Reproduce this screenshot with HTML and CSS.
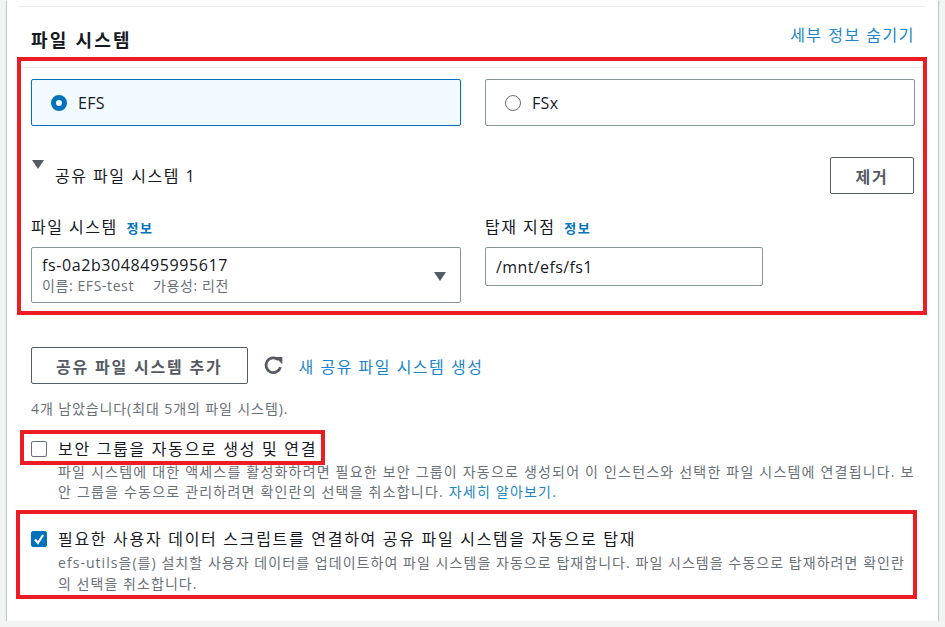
FILE: index.html
```html
<!DOCTYPE html>
<html lang="ko">
<head>
  <meta charset="UTF-8">
  <meta name="viewport" content="width=device-width, initial-scale=1.0">
  <link rel="stylesheet" href="styles.css">
  <title>파일 시스템</title>
</head>
<body>
  <div class="card">
    <div class="divider"></div>

    <div class="card-header">
      <h2>파일 시스템</h2>
      <a href="#" class="link header-link">세부 정보 숨기기</a>
    </div>

    <div class="fs-section">
      <span class="mark mark-fs"></span>

      <div class="tiles">
        <label class="tile tile-selected">
          <span class="radio radio-on"></span>
          <span>EFS</span>
        </label>
        <label class="tile">
          <span class="radio"></span>
          <span>FSx</span>
        </label>
      </div>

      <div class="expander">
        <span class="caret"></span>
        <span class="expander-title">공유 파일 시스템 1</span>
        <button class="btn btn-remove">제거</button>
      </div>

      <div class="fields">
        <div class="field">
          <div class="field-label">파일 시스템 <a href="#" class="info">정보</a></div>
          <div class="select">
            <div>
              <div class="select-value">fs-0a2b3048495995617</div>
              <div class="select-meta"><span>이름: EFS-test</span><span>가용성: 리전</span></div>
            </div>
            <span class="select-arrow"></span>
          </div>
        </div>
        <div class="field">
          <div class="field-label">탑재 지점 <a href="#" class="info">정보</a></div>
          <input class="text-input" type="text" value="/mnt/efs/fs1">
        </div>
      </div>
    </div>

    <div class="actions">
      <button class="btn btn-add">공유 파일 시스템 추가</button>
      <svg class="refresh" width="23" height="21" viewBox="0 0 20 20">
        <path d="M16.6 11.5A7 7 0 1 1 14.6 4.6" fill="none" stroke="#545b64" stroke-width="2.6"/>
        <polygon points="11.5,1.8 18.4,1.8 18.4,8.7" fill="#545b64"/>
      </svg>
      <a href="#" class="link">새 공유 파일 시스템 생성</a>
    </div>

    <p class="note">4개 남았습니다(최대 5개의 파일 시스템).</p>

    <div class="check-row check-sg">
      <span class="mark mark-sg"></span>
      <span class="checkbox"></span>
      <div>
        <div class="check-label">보안 그룹을 자동으로 생성 및 연결</div>
        <div class="check-desc">파일 시스템에 대한 액세스를 활성화하려면 필요한 보안 그룹이 자동으로 생성되어 이 인스턴스와 선택한 파일 시스템에 연결됩니다. 보안 그룹을 수동으로 관리하려면 확인란의 선택을 취소합니다. <a href="#" class="link">자세히 알아보기.</a></div>
      </div>
    </div>

    <div class="check-row check-mount">
      <span class="mark mark-mount"></span>
      <span class="checkbox checkbox-on">
        <svg width="12" height="12" viewBox="0 0 12 12"><path d="M2 6.5l3 3.5 5-8" fill="none" stroke="#fff" stroke-width="2.2"/></svg>
      </span>
      <div>
        <div class="check-label">필요한 사용자 데이터 스크립트를 연결하여 공유 파일 시스템을 자동으로 탑재</div>
        <div class="check-desc">efs-utils을(를) 설치할 사용자 데이터를 업데이트하여 파일 시스템을 자동으로 탑재합니다. 파일 시스템을 수동으로 탑재하려면 확인란의 선택을 취소합니다.</div>
      </div>
    </div>
  </div>
</body>
</html>
```

FILE: styles.css
```css
body {
  margin: 0;
  background-color: #f2f3f3;
  font-family: "Open Sans", "Noto Sans CJK KR", sans-serif;
  color: #16191f;
  letter-spacing: 1.5px;
}

.card {
  position: relative;
  margin-left: 7px;
  width: 931px;
  box-sizing: border-box;
  padding: 0 23px 27px 24px;
  background-color: #fff;
  box-shadow: 0 1px 1px 0 rgba(0, 28, 36, 0.3), 1px 1px 1px 0 rgba(0, 28, 36, 0.15), -1px 1px 1px 0 rgba(0, 28, 36, 0.15);
}

.divider {
  margin: 0 -11px 0 -12px;
  padding-top: 6px;
  border-bottom: 1px solid #eaeded;
}

.card-header {
  display: flex;
  justify-content: space-between;
  align-items: flex-start;
  margin-top: 22px;
  height: 22px;
}

.card-header h2 {
  margin: 0;
  font-size: 18px;
  line-height: 22px;
  font-weight: 700;
  letter-spacing: 2.2px;
}

.header-link {
  margin-top: -5px;
  margin-right: 0;
  font-size: 16px;
  line-height: 22px;
}

.link {
  color: #1a86c9;
  text-decoration: none;
}

/* red annotation boxes drawn over the content */
.mark {
  position: absolute;
  border: 4px solid #ec1c24;
  pointer-events: none;
}

.mark-fs {
  top: -10px;
  left: -14px;
  right: -12px;
  bottom: -12px;
}

.mark-sg {
  top: -8px;
  left: -11px;
  width: 297px;
  height: 27px;
}

.mark-mount {
  top: -18px;
  left: -15px;
  right: -2px;
  bottom: -5px;
}

.fs-section {
  position: relative;
  margin-top: 16px;
  padding-top: 12px;
}

.fs-section::before {
  content: "";
  position: absolute;
  top: 0;
  left: -12px;
  right: -11px;
  border-top: 1px solid #eaeded;
}

.tiles {
  display: grid;
  grid-template-columns: 1fr 1fr;
  gap: 24px;
}

.tile {
  display: flex;
  align-items: center;
  gap: 11px;
  height: 47px;
  box-sizing: border-box;
  padding-left: 19px;
  border: 1px solid #879596;
  border-radius: 2px;
  font-size: 16px;
  letter-spacing: 0.3px;
}

.tile-selected {
  background-color: #f1faff;
  border-color: #0073bb;
}

.radio {
  width: 16px;
  height: 16px;
  box-sizing: border-box;
  border: 1.5px solid #687078;
  border-radius: 50%;
}

.radio-on {
  border: 5px solid #0073bb;
}

.expander {
  display: flex;
  align-items: center;
  margin-top: 31px;
}

.caret {
  align-self: flex-start;
  margin: 3px 11px 0 1px;
  width: 0;
  height: 0;
  border-left: 6px solid transparent;
  border-right: 6px solid transparent;
  border-top: 9px solid #545b64;
}

.expander-title {
  flex: 1;
  margin-top: -2px;
  font-size: 16px;
  color: #16191f;
}

.btn {
  background-color: #fff;
  border: 1px solid #545b64;
  border-radius: 2px;
  color: #545b64;
  font-family: inherit;
  font-size: 16px;
  font-weight: 700;
  letter-spacing: 1.8px;
  cursor: pointer;
}

.btn-remove {
  width: 84px;
  height: 37px;
  margin-right: 1px;
  font-weight: 600;
}

.fields {
  display: grid;
  grid-template-columns: 1fr 1fr;
  gap: 24px;
  margin-top: 22px;
}

.field-label {
  font-size: 16px;
  line-height: 22px;
  margin-bottom: 8px;
}

.info {
  margin-left: 3px;
  font-size: 13px;
  font-weight: 700;
  color: #0073bb;
  text-decoration: none;
}

.select {
  display: flex;
  justify-content: space-between;
  align-items: center;
  height: 56px;
  box-sizing: border-box;
  padding: 0 14px 0 10px;
  border: 1px solid #879596;
  border-radius: 2px;
}

.select-value {
  font-size: 16px;
  line-height: 20px;
  letter-spacing: 0.6px;
}

.select-meta {
  display: flex;
  gap: 19px;
  font-size: 14px;
  line-height: 21px;
  color: #687078;
  letter-spacing: 0.6px;
}

.select-arrow {
  margin-top: 2px;
  width: 0;
  height: 0;
  border-left: 6px solid transparent;
  border-right: 6px solid transparent;
  border-top: 9px solid #545b64;
}

.text-input {
  display: block;
  width: 278px;
  height: 39px;
  box-sizing: border-box;
  padding: 0 10px;
  border: 1px solid #879596;
  border-radius: 2px;
  font-family: inherit;
  font-size: 16px;
  letter-spacing: 0.4px;
  color: #16191f;
}

.actions {
  display: flex;
  align-items: center;
  margin-top: 44px;
  font-size: 16px;
}

.btn-add {
  height: 37px;
  padding: 0 24px;
}

.refresh {
  margin: 0 14px 0 14px;
}

.note {
  margin: 15px 0 0;
  font-size: 14px;
  line-height: 20px;
  color: #687078;
  letter-spacing: 0.9px;
}

.check-row {
  position: relative;
  display: flex;
  gap: 11px;
}

.check-sg {
  margin-top: 19px;
}

.check-mount {
  margin-top: 26px;
}

.checkbox {
  flex: none;
  display: flex;
  align-items: center;
  justify-content: center;
  margin-top: 3px;
  width: 16px;
  height: 16px;
  box-sizing: border-box;
  border: 1.5px solid #687078;
  border-radius: 2px;
}

.checkbox-on {
  background-color: #0073bb;
  border-color: #0073bb;
}

.check-label {
  font-size: 16px;
  line-height: 22px;
  margin-bottom: 2px;
  letter-spacing: 1.7px;
}

.check-desc {
  font-size: 14px;
  line-height: 20px;
  color: #687078;
  letter-spacing: 1.2px;
}

.check-mount .check-desc {
  line-height: 21px;
  letter-spacing: 1.05px;
}
```
